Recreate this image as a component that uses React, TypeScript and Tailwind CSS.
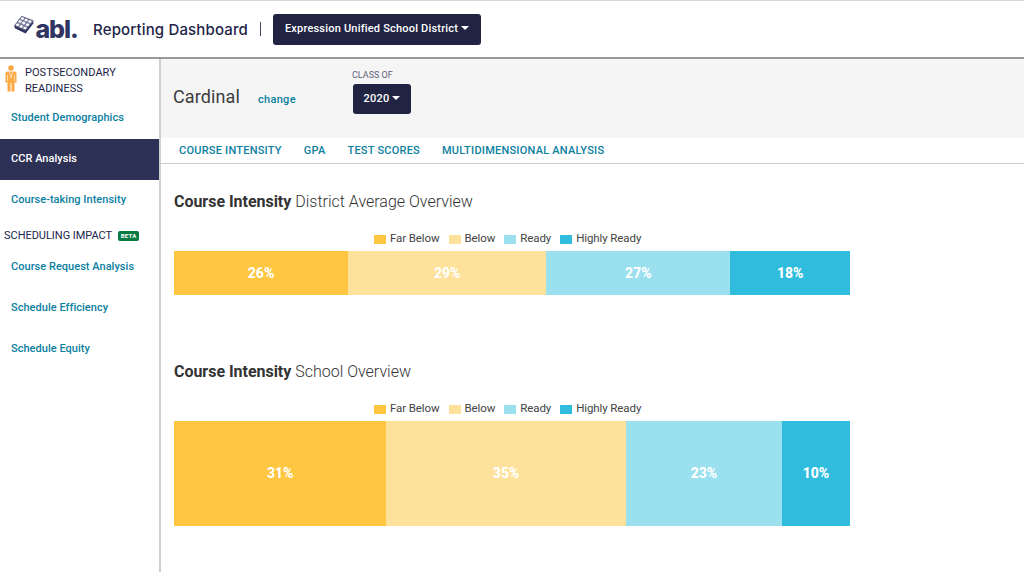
import clsx from 'clsx'

interface Segment {
  value: number
  width: number
}

interface NavLinkProps {
  label: string
  active?: boolean
}

const LEVELS = [
  { label: 'Far Below', color: 'bg-[#ffc642]' },
  { label: 'Below', color: 'bg-[#fee19a]' },
  { label: 'Ready', color: 'bg-[#9ae0ee]' },
  { label: 'Highly Ready', color: 'bg-[#30bddd]' },
]

const TABS = ['COURSE INTENSITY', 'GPA', 'TEST SCORES', 'MULTIDIMENSIONAL ANALYSIS']

const DISTRICT: Segment[] = [
  { value: 26, width: 174 },
  { value: 29, width: 198.4 },
  { value: 27, width: 184 },
  { value: 18, width: 119.6 },
]

const SCHOOL: Segment[] = [
  { value: 31, width: 212.3 },
  { value: 35, width: 239.7 },
  { value: 23, width: 156 },
  { value: 10, width: 68 },
]

function Logo() {
  return (
    <div className="flex h-[30px] w-[64px] text-[#303561]">
      <svg className="mt-[1px] h-[20px] w-[20px] shrink-0" viewBox="0 0 21 20">
        <path d="M0.3 10.5 L12 15.5 L20.5 5.5 L20.3 8.4 L12.2 19 L0.8 13.4 Z" fill="currentColor" />
        <path d="M8 0.8 L20 5.4 L12 15.8 L0.6 10.6 Z" fill="#7c80a3" />
        <g fill="#fff">
          <ellipse cx="8.8" cy="3.1" rx="1.7" ry="1.35" />
          <ellipse cx="12.7" cy="4.7" rx="1.7" ry="1.35" />
          <ellipse cx="16.7" cy="6.3" rx="1.7" ry="1.35" />
          <ellipse cx="6.3" cy="6.4" rx="1.7" ry="1.35" />
          <ellipse cx="10.2" cy="8" rx="1.7" ry="1.35" />
          <ellipse cx="14.2" cy="9.7" rx="1.7" ry="1.35" />
          <ellipse cx="3.7" cy="9.8" rx="1.7" ry="1.35" />
          <ellipse cx="7.6" cy="11.5" rx="1.7" ry="1.35" />
          <ellipse cx="11.6" cy="13.2" rx="1.7" ry="1.35" />
        </g>
        <path d="M8 0.8 L20 5.4 L12 15.8 L0.6 10.6 Z" fill="none" stroke="currentColor" strokeWidth="0.6" />
      </svg>
      <span className="ml-[1.5px] font-[Inter,sans-serif] text-[25px] leading-[30px] font-extrabold tracking-[-1.1px]">
        abl.
      </span>
    </div>
  )
}

function PersonIcon() {
  return (
    <svg className="h-[28px] w-[12px] shrink-0" viewBox="0 0 12 28">
      <circle cx="6" cy="3" r="2.8" fill="#fba945" />
      <path
        d="M2.5 6.5 H9.5 Q11.5 6.5 11.5 8.5 V17.5 H9.5 V26.5 H6.5 V18 H5.5 V26.5 H2.5 V17.5 H0.5 V8.5 Q0.5 6.5 2.5 6.5 Z"
        fill="#fba945"
      />
      <path d="M2.5 10 V16 M9.5 10 V16" stroke="#fff" strokeWidth="0.6" />
      <path d="M4.4 6.5 L6 13 L7.6 6.5" stroke="#fff" strokeWidth="0.6" fill="none" />
    </svg>
  )
}

function Caret() {
  return <span className="mb-[3px] ml-[3px] h-0 w-0 border-x-[4px] border-t-[4px] border-x-transparent border-t-white" />
}

function NavLink({ label, active }: NavLinkProps) {
  return (
    <a
      className={clsx(
        'flex h-[41px] items-center pl-[11px] text-[11px] font-medium tracking-[0.03px]',
        active ? 'bg-[#2e3156] text-white' : 'text-[#0c809f]'
      )}
    >
      {label}
    </a>
  )
}

function Sidebar() {
  return (
    <aside className="w-[161px] shrink-0 border-r-2 border-[#cfcfd2]">
      <div className="flex h-[39px] pt-[6px] pl-[5px]">
        <PersonIcon />
        <div className="ml-[8px] text-[11px] leading-[16px] tracking-[0.04px] text-[#22244a]">
          POSTSECONDARY
          <br />
          READINESS
        </div>
      </div>
      <nav>
        <NavLink label="Student Demographics" />
        <NavLink label="CCR Analysis" active />
        <NavLink label="Course-taking Intensity" />
      </nav>
      <div className="flex h-[26px] items-center pt-[5px] pl-[4px] text-[11px] tracking-[-0.03px] text-[#22244a]">
        SCHEDULING IMPACT
        <span className="mb-[2px] ml-[6px] flex h-[10px] w-[21px] items-center justify-center rounded-[2px] bg-[#087a43] text-[6px] font-bold tracking-[0.3px] text-white">
          BETA
        </span>
      </div>
      <nav>
        <NavLink label="Course Request Analysis" />
        <NavLink label="Schedule Efficiency" />
        <NavLink label="Schedule Equity" />
      </nav>
    </aside>
  )
}

function Overview({ title, segments, tall }: { title: string; segments: Segment[]; tall?: boolean }) {
  return (
    <section className="w-[676px]">
      <h2 className="h-[22px] text-[16px] leading-[22px] font-light whitespace-nowrap text-[#333]">
        <span className="font-bold tracking-[-0.03px]">Course Intensity</span> {title}
      </h2>
      <div className="mt-[16px] flex h-[20px] gap-[9px] pl-[200px]">
        {LEVELS.map(level => (
          <div key={level.label} className="flex items-center text-[11.5px] tracking-[-0.1px] whitespace-nowrap text-[#444]">
            <span className={clsx('mr-[4px] h-[9px] w-[12px]', level.color)} />
            {level.label}
          </div>
        ))}
      </div>
      <div className={clsx('mt-[2px] flex', tall ? 'h-[105px]' : 'h-[44px]')}>
        {segments.map((segment, i) => (
          <div
            key={segment.value}
            className={clsx('flex items-center justify-center text-[14px] font-extrabold text-white', LEVELS[i].color)}
            style={{ width: segment.width }}
          >
            {segment.value}%
          </div>
        ))}
      </div>
    </section>
  )
}

export default function App() {
  return (
    <div className="flex h-[572px] w-[1024px] flex-col overflow-hidden bg-white font-[Roboto,sans-serif]">
      <header className="flex h-[59px] shrink-0 items-center border-t border-b-2 border-t-[#d8d8d8] border-b-[#999] pl-[14px]">
        <Logo />
        <h1 className="ml-[15px] w-[156px] pt-[2px] font-[Inter,sans-serif] text-[15px] font-medium tracking-[0.15px] whitespace-nowrap text-[#22244a]">
          Reporting Dashboard
        </h1>
        <span className="ml-[11px] h-[14px] w-px bg-[#444663]" />
        <button className="ml-[12px] flex h-[31px] w-[208px] items-center justify-center rounded-[3px] bg-[#212342] text-[11px] font-medium tracking-[0.2px] whitespace-nowrap text-white">
          Expression Unified School District
          <Caret />
        </button>
      </header>
      <div className="flex min-h-0 flex-1">
        <Sidebar />
        <main className="flex-1">
          <div className="flex h-[79px] bg-[#f5f5f5] pl-[12px]">
            <div className="flex h-[50px] w-[180px] items-baseline pt-[24px]">
              <span className="w-[85px] text-[18px] tracking-[0.1px] text-[#3c3c3c]">Cardinal</span>
              <a className="text-[11px] font-medium tracking-[0.3px] text-[#0c809f]">change</a>
            </div>
            <div className="pt-[9px]">
              <div className="-ml-px h-[16px] text-[9px] leading-[14px] text-[#5d5f78]">CLASS OF</div>
              <button className="flex h-[30px] w-[58px] items-center justify-center rounded-[3px] bg-[#212342] text-[11px] font-medium tracking-[0.2px] text-white">
                2020
                <Caret />
              </button>
            </div>
          </div>
          <nav className="flex h-[26px] items-center gap-[22px] border-b border-[#ccccd0] pt-px pl-[18px] text-[11px] font-medium tracking-[0.23px] text-[#0c809f]">
            {TABS.map(tab => (
              <a key={tab}>{tab}</a>
            ))}
          </nav>
          <div className="flex flex-col gap-[66px] pt-[27px] pl-[13px]">
            <Overview title="District Average Overview" segments={DISTRICT} />
            <Overview title="School Overview" segments={SCHOOL} tall />
          </div>
        </main>
      </div>
    </div>
  )
}
